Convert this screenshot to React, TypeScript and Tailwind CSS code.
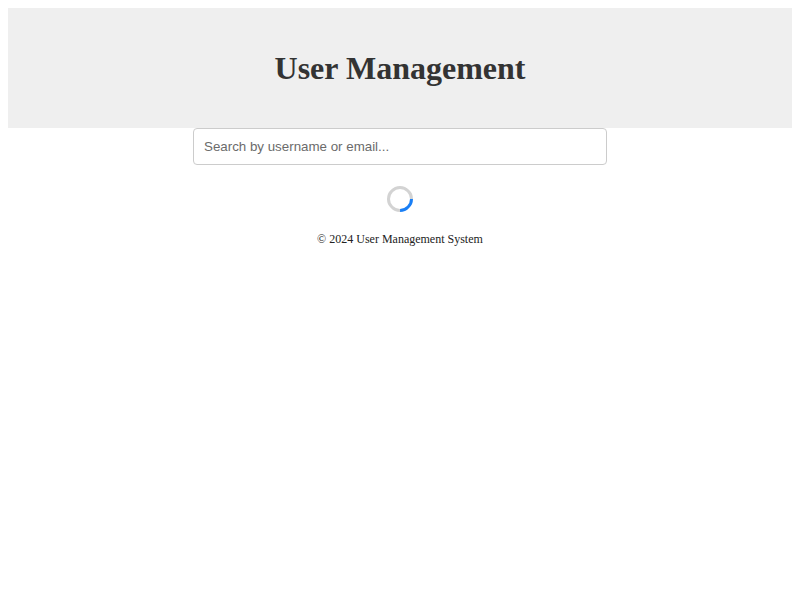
export default function App() {
  return (
    <div className="min-h-[600px] bg-white p-2 font-['Liberation_Serif',serif] text-[#333]">
      <header className="bg-[#efefef] py-5 text-center">
        <h1 className="my-[21px] text-[32px] leading-[38px] font-bold">User Management</h1>
      </header>

      <main className="flex flex-col items-center">
        <input
          type="text"
          placeholder="Search by username or email..."
          className="block h-[37px] w-[414px] rounded border border-[#ccc] px-[10px] font-['Liberation_Sans',sans-serif] text-[13.33px] text-[#333] placeholder:text-[#6b6b6b] outline-none"
        />

        <div className="mt-[21px] h-[26px] w-[26px] rotate-[135deg] rounded-full border-[3px] border-[#d3d3d3] border-t-[#1a7ff5]" />
      </main>

      <footer className="mt-[20px] text-center text-[12px] leading-[15px] text-[#222]">
        © 2024 User Management System
      </footer>
    </div>
  )
}
